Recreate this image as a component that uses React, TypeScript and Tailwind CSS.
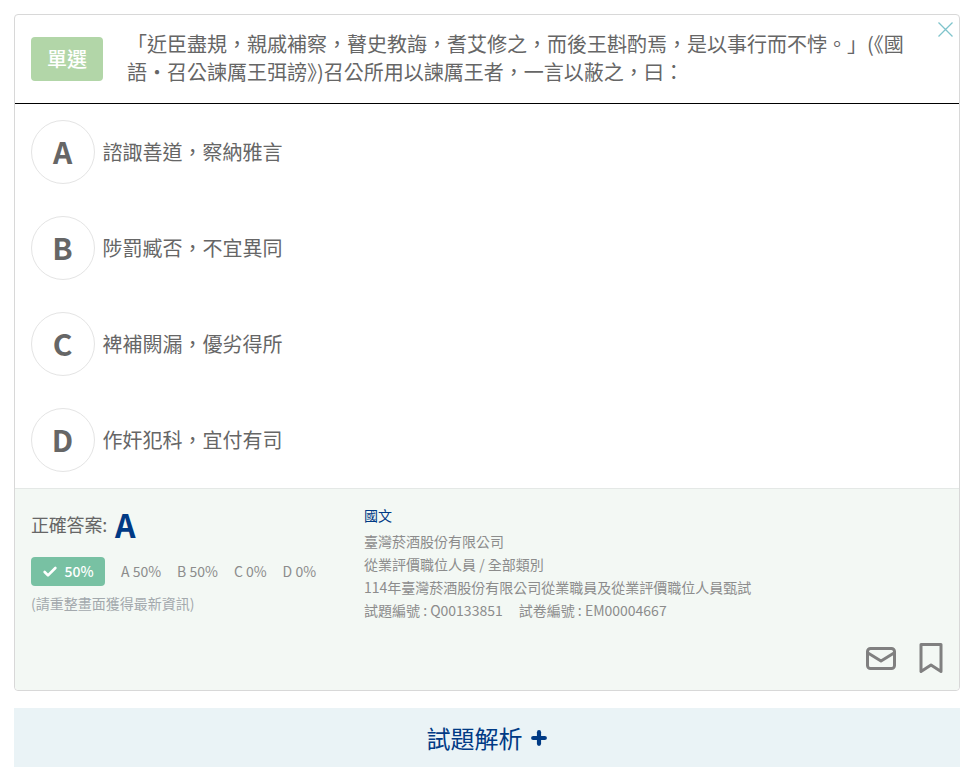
import React from 'react';
import { Check, Plus } from 'lucide-react';

const options = [
  { key: 'A', text: '諮諏善道，察納雅言' },
  { key: 'B', text: '陟罰臧否，不宜異同' },
  { key: 'C', text: '裨補闕漏，優劣得所' },
  { key: 'D', text: '作奸犯科，宜付有司' },
];

const stats = ['A 50%', 'B 50%', 'C 0%', 'D 0%'];

export default function App() {
  return (
    <div className="w-[973px] h-[777px] overflow-hidden bg-white pl-[14px] pr-[13px] pt-[14px] font-['Noto_Sans_CJK_TC','Noto_Sans',sans-serif]">
      {/* Question card */}
      <div className="relative h-[677px] flex flex-col rounded border border-[#d8d8d8] bg-white">
        <button className="absolute right-[5px] top-[6px] text-[#7fc4cc]">
          <svg width="17" height="17" viewBox="0 0 17 17" fill="none" stroke="currentColor" strokeWidth="1.3">
            <path d="M1.5 1.5l14 14M15.5 1.5l-14 14" />
          </svg>
        </button>

        <div className="h-[89px] shrink-0 flex items-start border-b border-black pl-4 pr-[40px]">
          <span className="mt-[22px] w-[72px] h-[44px] shrink-0 flex items-center justify-center rounded bg-[#b2d6a8] text-white text-[20px] font-medium">
            單選
          </span>
          <p className="ml-6 mt-[15px] text-[20px] leading-[28px] text-[#666666]">
            「近臣盡規，親戚補察，瞽史教誨，耆艾修之，而後王斟酌焉，是以事行而不悖。」(《國語‧召公諫厲王弭謗》)召公所用以諫厲王者，一言以蔽之，曰：
          </p>
        </div>

        <div className="flex-1 flex flex-col gap-8 pl-4 pt-4">
          {options.map((o) => (
            <div key={o.key} className="flex items-center gap-[7.5px]">
              <span className="w-16 h-16 flex items-center justify-center rounded-full border border-[#e4e4e4] pr-[1px] pb-[2px] text-[30px] font-bold text-[#666666]">
                {o.key}
              </span>
              <span className="text-[20px] text-[#666666]">{o.text}</span>
            </div>
          ))}
        </div>

        {/* Answer info */}
        <div className="relative h-[202px] shrink-0 flex border-t border-[#e4e8e6] bg-[#f3f8f4] rounded-b pl-4">
          <div className="w-[333px] shrink-0">
            <div className="mt-[17px] flex items-center h-[36px]">
              <span className="text-[18px] tracking-[-0.2px] text-[#666666]">正確答案:</span>
              <span className="ml-2 text-[32px] font-bold text-[#003a85]">A</span>
            </div>
            <div className="mt-[15px] flex items-center text-[14px] text-[#8c8c8c]">
              <span className="w-[74px] h-[29px] flex items-center justify-center gap-[6px] rounded bg-[#78c1a3] text-white font-medium">
                <Check size={16} strokeWidth={4} />
                50%
              </span>
              <span className="ml-4 flex gap-4">
                {stats.map((s) => (
                  <span key={s}>{s}</span>
                ))}
              </span>
            </div>
            <p className="mt-[7px] text-[14px] text-[#a3a9ad]">(請重整畫面獲得最新資訊)</p>
          </div>
          <div className="mt-[15px] text-[14px] leading-[23px] text-[#8c8c8c]">
            <p className="text-[#003a85]">國文</p>
            <p className="mt-[3px]">臺灣菸酒股份有限公司</p>
            <p>從業評價職位人員 / 全部類別</p>
            <p>114年臺灣菸酒股份有限公司從業職員及從業評價職位人員甄試</p>
            <p>
              試題編號 : Q00133851<span className="ml-4">試卷編號 : EM00004667</span>
            </p>
          </div>
          <div className="absolute right-4 bottom-[17px] flex items-center gap-[23px] text-[#808080]">
            <svg width="30" height="23" viewBox="0 0 30 23" fill="none" stroke="currentColor" strokeWidth="3" strokeLinejoin="round">
              <rect x="1.5" y="1.5" width="27" height="20" rx="3" />
              <path d="M2 6l13 8 13-8" />
            </svg>
            <svg width="24" height="30" viewBox="0 0 24 30" fill="none" stroke="currentColor" strokeWidth="3" strokeLinejoin="round">
              <path d="M2 1.5h20v27l-10-6.5-10 6.5z" />
            </svg>
          </div>
        </div>
      </div>

      {/* Explanation toggle */}
      <button className="mt-[17px] w-full h-[59px] flex items-center justify-center gap-[6px] pl-[1px] bg-[#eaf3f6] text-[24px] text-[#003a85]">
        試題解析
        <Plus size={20} strokeWidth={5} />
      </button>
    </div>
  );
}
